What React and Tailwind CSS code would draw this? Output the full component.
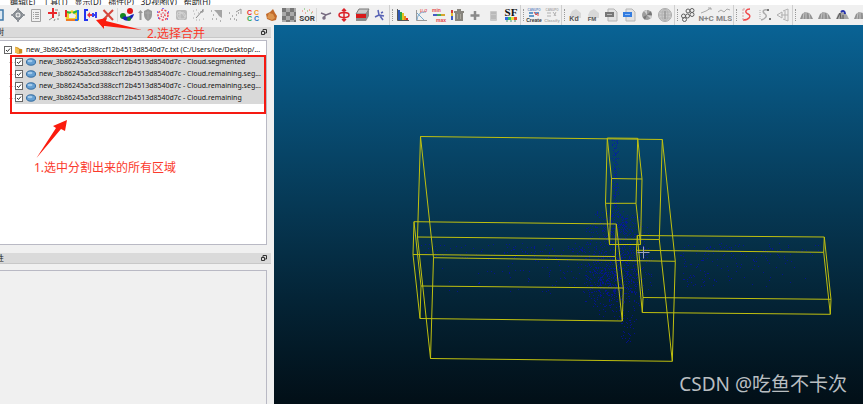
import clsx from 'clsx';

const menus = ['编辑(E)', '工具(T)', '显示(D)', '插件(P)', '3D视图(V)', '帮助(H)'];

const clouds = [
  'new_3b86245a5cd388ccf12b4513d8540d7c - Cloud.segmented',
  'new_3b86245a5cd388ccf12b4513d8540d7c - Cloud.remaining.seg...',
  'new_3b86245a5cd388ccf12b4513d8540d7c - Cloud.remaining.seg...',
  'new_3b86245a5cd388ccf12b4513d8540d7c - Cloud.remaining',
];

// Toolbar drawings, all on a 16 x 16 grid
const art = {
  open: <path d="M2 3h9v10H2z" fill="#dce8f2" stroke="#3f78a8" strokeWidth="1.5" />,
  pick: (
    <g fill="none" stroke="#858b91">
      <path d="M8 2l6 6-6 6-6-6z" />
      <circle cx="8" cy="8" r="3.500" strokeWidth="2" />
      <path d="M8 1v4M8 11v4M1 8h4M11 8h4" strokeWidth="1.500" />
      <circle cx="8" cy="8" r="1" fill="#eee" />
    </g>
  ),
  list: (
    <g fill="none" stroke="#a3a3a3">
      <path d="M3.500 2.500h9v12h-9z" />
      <path d="M5 5.500h1M7 5.500h4M5 7.500h1M7 7.500h4M5 9.500h1M7 9.500h4M5 11.500h1M7 11.500h4" />
    </g>
  ),
  pointPick: (
    <g>
      <path d="M2 6h9M7 1v10" stroke="#e8282d" strokeWidth="2" />
      <path d="M9 3h3M13 5v3M3 13l3-2M8 14l1-2M11 12h2M12 9l2-1" stroke="#8a8a8a" />
    </g>
  ),
  clone: (
    <g>
      <path d="M1 3l4 2 3-2 3 2 4-2v11H2z" fill="#eed22a" />
      <path d="M2 3v7" stroke="#e92525" strokeWidth="2" />
      <path d="M2 13h9" stroke="#f07a25" strokeWidth="2" />
      <path d="M3 5l4 1M9 6l4-2" stroke="#27b83c" strokeWidth="2" />
      <path d="M14 3v10M11 13h3" stroke="#226ef2" strokeWidth="2" />
      <path d="M5 7l3-1 4 2-1 3H5z" fill="#eee" />
    </g>
  ),
  merge: (
    <g fill="none" strokeWidth="2">
      <path d="M6 3H3v10h3" stroke="#2334ef" />
      <path d="M10 8H6" stroke="#e63742" />
      <path d="M8 5v6L5 8z" fill="#e63742" />
      <path d="M11 6v4M14 5v6M11 8h3" stroke="#3641ef" />
    </g>
  ),
  remove: <path d="M3.500 3l9.500 10M13 3L3 13" stroke="#d4473d" strokeWidth="2" fill="none" />,
  register: (
    <g>
      <circle cx="11" cy="4" r="3" fill="#df1616" />
      <circle cx="4" cy="9" r="3" fill="#16871f" />
      <path d="M3 11c3 4 10 4 12-4l-3 1c-2 2-5 2-6 1z" fill="#1724b6" />
      <circle cx="10" cy="12" r="2" fill="#168526" />
    </g>
  ),
  shield: (
    <g fill="#989898">
      <path d="M1 6l2.500-3L6 6H4.500v7h-2V6z" />
      <path d="M7 4l4-2 4 2v4c0 3-2 5-4 6-2-1-4-3-4-6z" />
      <path d="M11 4v8M8 6h6" stroke="#aaa" />
    </g>
  ),
  subsample: (
    <g fill="none" strokeWidth="1.500">
      <circle cx="8" cy="8" r="5" stroke="#f24552" strokeDasharray="2 1.500" />
      <circle cx="8" cy="8" r="2" stroke="#e33d4d" strokeDasharray="1 1" />
      <path d="M2 5h1M13 5h1M3 11h1M12 12h1M8 1v1" stroke="#584bf2" />
    </g>
  ),
  octree: (
    <g>
      <rect x="3" y="3" width="11" height="10" rx="2" fill="#b9b9b9" />
      <path d="M5 5l6 1 2 3-2 3H6L4 8z M5 8l4-2 3 4M7 4v8" stroke="#d4d4d4" fill="none" />
    </g>
  ),
  scatterA: (
    <g fill="none" stroke="#aaa">
      <path d="M2 4h1M5 3h1M3 7h1M7 6h1M2 11h1M5 13h1M8 13h1M12 12h1" />
      <path d="M5 11l7-8M9 5h3V2" stroke="#8a8a8a" />
    </g>
  ),
  scatterB: (
    <g>
      <path d="M5 3h8v8l-3-2-2-3z" fill="#a5a5a5" />
      <path d="M2 4h1M4 8h1M3 12h1M7 12h1M11 14h1" stroke="#777" />
    </g>
  ),
  scatterC: (
    <g fill="none" stroke="#999">
      <path d="M3 12h1M5 9h1M7 12h1M9 8h1M11 6h1M2 6h1M9 13h1" strokeWidth="1.500" />
      <path d="M9 5l5-3v5" />
    </g>
  ),
  cc: (
    <g fontFamily="Liberation Sans" fontWeight="bold" fontSize="7">
      <text x="2" y="8" fill="#e9292e">C</text>
      <text x="9" y="8" fill="#f49722">C</text>
      <text x="2" y="14" fill="#2caa54">C</text>
      <text x="9" y="14" fill="#2874c9">C</text>
    </g>
  ),
  primitive: (
    <g>
      <path d="M3 7l4-2 3-3 2 4 2 3-1 4-4 1-5-2z" fill="#c16a2b" />
      <path d="M6 6l4 1 2 4-3 2-5-2z" fill="#dc954f" />
    </g>
  ),
  checker: (
    <g>
      <path d="M1 1h14v14H1z" fill="#aaa" />
      <path d="M1 1h4v4H1zM9 1h4v4H9zM5 5h4v4H5zM13 5h2v4h-2zM1 9h4v4H1zM9 9h4v4H9zM5 13h4v2H5zM13 13h2v2h-2z" fill="#777" />
    </g>
  ),
  sor: (
    <g>
      <text x="8" y="14" textAnchor="middle" fontFamily="Roboto" fontWeight="bold" fontSize="8" fill="#3c3c3c">SOR</text>
      <path d="M3 4h1M6 6h1M10 3h1M13 5h1" stroke="#ef6a50" />
      <path d="M5 2h1M8 4h1M12 6h1" stroke="#63b957" />
    </g>
  ),
  scissors: (
    <g fill="none" stroke="#776b80" strokeWidth="1.500">
      <path d="M3 6l5 2 5-2M8 8l-2 2" />
      <circle cx="6" cy="11" r="1" />
    </g>
  ),
  translate: (
    <g fill="none" stroke="#db2229" strokeWidth="1.500">
      <path d="M8 2v12M6 4l2-2 2 2M6 12l2 2 2-2" />
      <ellipse cx="8" cy="8" rx="5" ry="2.500" />
    </g>
  ),
  section: (
    <g>
      <path d="M5 2h10l-3 5H2z" fill="#c9c9c9" stroke="#797979" />
      <path d="M2 7h10v4H2z" fill="#d91919" />
      <path d="M12 7l3-5v7l-3 5H2v-3h10z" fill="#8d8d8d" />
    </g>
  ),
  polyline: (
    <path d="M6 3l1 5 5 1M7 8l-4 2M9 6l2-1M8 9l3 4" fill="none" stroke="#5863b5" strokeWidth="1.500" />
  ),
  histogram: (
    <g>
      <path d="M3 3h2v10H3z" fill="#2e59b8" />
      <path d="M5 5h2v8H5z" fill="#28a445" />
      <path d="M7 6h2v7H7z" fill="#e2c420" />
      <path d="M9 9h2v4H9z" fill="#eb8822" />
      <path d="M11 11h2v2h-2z" fill="#da2c2c" />
      <path d="M2.500 2v11.500H14" stroke="#555" fill="none" />
    </g>
  ),
  stats: (
    <g fill="none">
      <path d="M3.500 3v10.500H14" stroke="#999" />
      <path d="M4 13c1-7 4-8 9-8M4 6l7 7" stroke="#76a8cc" />
      <text x="7" y="5" fontFamily="Liberation Sans" fontSize="5" fill="#e53b3b">μ,σ</text>
    </g>
  ),
  minmax: (
    <g fontFamily="Liberation Sans" fontWeight="bold" fontSize="5" fill="#e44848">
      <text x="1" y="5">min</text>
      <text x="5" y="15">max</text>
      <path d="M2 8h4" stroke="#455bc5" strokeWidth="2" />
      <path d="M6 8h4" stroke="#44a85b" strokeWidth="2" />
      <path d="M10 8h4" stroke="#d5a62d" strokeWidth="2" />
    </g>
  ),
  trash: (
    <g>
      <path d="M2 3h2v3H2z" fill="#d43a32" />
      <path d="M2 6h2v3H2z" fill="#e6bd34" />
      <path d="M2 9h2v4H2z" fill="#3a58c5" />
      <path d="M5 4h10v2H5zM8 2h4v2H8zM6 6h8v8H6z" fill="#88857e" />
      <path d="M8.500 7v5M11.500 7v5" stroke="#aaa69d" />
    </g>
  ),
  plus: <path d="M8 4v9M3.500 8.500h9" stroke="#8a8a8a" strokeWidth="2.500" />,
  calc: (
    <g>
      <rect x="5" y="4" width="7" height="10" rx="1" fill="#c9c9c9" />
      <path d="M6 6h5M6 9h5M6 11h5" stroke="#aaa" />
    </g>
  ),
  sf: (
    <g>
      <text x="8" y="9" textAnchor="middle" fontFamily="Liberation Serif" fontWeight="bold" fontSize="11" fill="#111">SF</text>
      <path d="M2 10h3v3H2z" fill="#3468df" />
      <path d="M5 10h3v3H5z" fill="#31c568" />
      <path d="M8 10h3v3H8z" fill="#ead938" />
      <path d="M11 10h3v3h-3z" fill="#e44831" />
      <path d="M3 14h2M7 14h2M11 14h2" stroke="#4d9b78" />
    </g>
  ),
  canupoCreate: (
    <g fontFamily="Liberation Sans" fontWeight="bold">
      <text x="8" y="4" textAnchor="middle" fontSize="3" fill="#6f8fc5">CANUPO</text>
      <path d="M3 6h4M3 9h5M9 6h4" stroke="#367cbc" strokeWidth="1.500" />
      <path d="M8 5l2 3 2-2M11 8h2" stroke="#df4a4a" fill="none" />
      <text x="8" y="15" textAnchor="middle" fontSize="5" fill="#333">Create</text>
    </g>
  ),
  canupoClassify: (
    <g fontFamily="Liberation Sans" fontWeight="bold" fill="#aaa">
      <text x="8" y="4" textAnchor="middle" fontSize="3">CANUPO</text>
      <path d="M3 6h4M3 9h4M9 5l3 4M12 5l-2 4" stroke="#b0b0b0" />
      <text x="8" y="15" textAnchor="middle" fontSize="4">Classify</text>
    </g>
  ),
  kd: (
    <g>
      <path d="M3 8l2-4 4-2 5 4v5H4z" fill="#d8d8d8" />
      <text x="7" y="14" textAnchor="middle" fontFamily="Liberation Sans" fontWeight="bold" fontSize="7" fill="#555">Kd</text>
    </g>
  ),
  fm: (
    <g>
      <path d="M3 8l2-4 4-2 5 4v5H4z" fill="#d8d8d8" />
      <text x="7" y="14" textAnchor="middle" fontFamily="Liberation Sans" fontWeight="bold" fontSize="6" fill="#555">FM</text>
    </g>
  ),
  fileGrey: (
    <g>
      <path d="M5 2h6l3 3v9H5z" fill="#e2e2e2" stroke="#b5b5b5" />
      <path d="M2 5h9v5H2z" fill="#777" />
      <path d="M4 7.500h5" stroke="#bbb" />
    </g>
  ),
  fileBlue: (
    <g>
      <path d="M5 2h6l3 3v9H5z" fill="#e2e2e2" stroke="#b5b5b5" />
      <path d="M2 5h9v5H2z" fill="#347de0" />
      <path d="M4 7.500h5" stroke="#8fbdf8" />
    </g>
  ),
  disc: (
    <g>
      <circle cx="8" cy="8" r="5" fill="#9d9d9d" />
      <path d="M8 8L5 4l3-1zM8 8l5 1-1 3z" fill="#d1d1d1" />
      <path d="M8 8l4-4 1 4zM8 8l-4 2 2 3z" fill="#777" />
    </g>
  ),
  sphere: (
    <g fill="none" stroke="#b2b2b2">
      <circle cx="8" cy="8" r="6.500" fill="#ccc" stroke="#aaa" />
      <ellipse cx="8" cy="8" rx="3" ry="6" />
      <path d="M8 1v14M3 5h10M2 8h12M3 11h10" />
      <path d="M8 4v8" stroke="#8b8b8b" />
    </g>
  ),
  clover: (
    <g fill="none" stroke="#606060">
      <circle cx="8" cy="4" r="2" />
      <circle cx="12" cy="3.500" r="2" />
      <circle cx="12" cy="7.500" r="2" />
      <circle cx="3.500" cy="9" r="2" />
      <circle cx="7.500" cy="9" r="2" />
      <circle cx="4.500" cy="12.500" r="2" />
    </g>
  ),
  nc: (
    <g>
      <path d="M3 6l5-2 5-3M10 1h3v2" fill="none" stroke="#aaa" />
      <text x="8" y="14" textAnchor="middle" fontFamily="Roboto" fontWeight="bold" fontSize="8" fill="#858585">N+C</text>
    </g>
  ),
  mls: (
    <g>
      <path d="M2 5l3-2 3 2 3-3 3 1" fill="none" stroke="#aaa" />
      <text x="8" y="14" textAnchor="middle" fontFamily="Roboto" fontWeight="bold" fontSize="8" fill="#858585">MLS</text>
    </g>
  ),
  curve: (
    <g fill="none">
      <path d="M11 2C7 2 5 5 9 7c4 2 1 6-5 6" stroke="#f14b4d" strokeWidth="1.500" />
      <path d="M4 2v11M4 2h3" stroke="#d5a3a3" strokeDasharray="2 1" />
    </g>
  ),
  curveGrey: (
    <g fill="none" stroke="#aaa">
      <path d="M10 3C6 2 5 5 8 7c3 2 0 5-4 6" strokeWidth="1.500" />
      <path d="M3 3v10" strokeDasharray="1 1" />
      <path d="M10 3h2M12 12h2" stroke="#777" strokeWidth="2" />
    </g>
  ),
  extrude: (
    <path d="M2 8l5-3v6zM8 4l5-2v12l-5-2M6 8h7M10 4v8" fill="none" stroke="#b0b0b0" />
  ),
  mesh: (
    <g>
      <path d="M2 12l2-5 3-2 4 1 2 2 2 4z" fill="#929292" />
      <path d="M6 6l-1 6M8 5v7M11 6l1 6" stroke="#c6c6c6" />
    </g>
  ),
  meshBlue: (
    <g>
      <path d="M2 12l2-5 3-2 4 1 2 2 2 4z" fill="#a5a5a5" />
      <path d="M3 12l3-6 1 6M9 8v4" stroke="#555" fill="none" />
      <path d="M7 5c2-2 4-1 4 2" stroke="#2834ad" strokeWidth="2" fill="none" />
    </g>
  ),
};

// '|' is a thin separator, each inner array is one docked toolbar
const toolbars = [
  [
    'open', 'pick', 'list', 'pointPick', 'clone', 'merge', 'remove', '|',
    'register', 'shield', 'subsample', 'octree', 'scatterA', 'scatterB', 'scatterC',
    'cc', 'primitive', 'checker', 'sor', '|',
    'scissors', 'translate', 'section', 'polyline',
  ],
  ['histogram', 'stats', 'minmax', 'trash', 'plus', 'calc', 'sf'],
  ['canupoCreate', 'canupoClassify'],
  ['kd', 'fm', 'fileGrey', 'fileBlue', 'disc', 'sphere'],
  ['clover', 'nc', 'mls'],
  ['curve', 'curveGrey', 'extrude'],
  ['mesh', 'mesh', 'meshBlue', 'mesh'],
];

// Bounding boxes: one loop per end, joined corner to corner
const boxes = [
  {
    left: [[420.5, 136.5], [417.5, 237], [430.5, 358.5], [433.5, 257.7]],
    right: [[662.3, 139.5], [659.3, 239.5], [672.3, 361.3], [675.3, 261.3]],
  },
  {
    left: [[414, 221.7], [413, 254.5], [420, 318.5], [421, 286]],
    right: [[616.3, 224], [615.3, 256.5], [622.3, 321], [623.3, 288]],
  },
  {
    left: [[607.3, 138], [605.5, 203.3], [609.5, 244.5], [611.5, 178.5]],
    right: [[637.7, 138.3], [636, 203.3], [640.5, 244.5], [642, 179]],
  },
  {
    left: [[637.3, 235.5], [636.5, 250.3], [642.3, 312.5], [643, 297.5]],
    right: [[824.3, 237], [823.7, 252.3], [830.3, 314.3], [831, 299.3]],
  },
];

const boxPath = ({ left, right }) => {
  const loop = (pts) => `M${pts.map((p) => p.join(' ')).join('L')}Z`;
  const edges = left.map((p, i) => `M${p.join(' ')}L${right[i].join(' ')}`).join('');
  return loop(left) + loop(right) + edges;
};

const makeCloud = () => {
  let seed = 7;
  const rand = () => {
    seed = (seed * 16807) % 2147483647;
    return seed / 2147483647;
  };
  const bell = () => rand() + rand() - 1;
  let d = '';
  const add = (count, x, y) => {
    for (let i = 0; i < count; i += 1) {
      d += `M${Math.round(x())} ${Math.round(y())}h1v1h-1z`;
    }
  };
  add(110, () => 615 + bell() * 4, () => 139 + rand() * 70);
  add(520, () => 618 + bell() * 36, () => 258 + bell() * 52);
  add(200, () => 606 + bell() * 22, () => 285 + bell() * 34);
  add(160, () => 614 + bell() * 30, () => 225 + bell() * 18);
  add(160, () => 624 + bell() * 20, () => 285 + bell() * 50);
  add(130, () => 590 - rand() * rand() * 165, () => 243 + rand() * 50);
  add(70, () => 420 + rand() * 180, () => 243 + rand() * 14);
  add(120, () => 680 + rand() * rand() * 140, () => 243 + rand() * 44);
  add(50, () => 700 + rand() * 120, () => 243 + rand() * 16);
  add(30, () => 628 + bell() * 9, () => 320 + rand() * 22);
  return d;
};

const cloudPath = makeCloud();

const ToolButton = ({ name }) => (
  <button type="button" aria-label={name} className="w-[18px] h-[18px] shrink-0 flex items-center justify-center">
    <svg viewBox="0 0 16 16" className="w-4 h-4" aria-hidden="true">{art[name]}</svg>
  </button>
);

const DockHeader = ({ title }) => (
  <div className="h-[11px] mr-px flex items-center justify-between bg-[#dadada] border-b border-[#c8c8c8] pr-1 overflow-hidden">
    <span className="-ml-1 text-[8px] leading-[10px] text-[#222]">{title}</span>
    <button type="button" aria-label={`Float ${title}`} className="flex">
      <svg viewBox="0 0 6 6" className="w-1.5 h-1.5" fill="none" stroke="#333">
        <path d="M2 2V.5h3.500V4H4M.5 2.500h3v3h-3z" />
      </svg>
    </button>
  </div>
);

const TreeRow = ({ label, root }) => (
  <label className={clsx('h-3 flex items-center gap-[3px] whitespace-nowrap', !root && 'bg-[#d9d9d9]')}>
    <span className="relative w-2 h-2 shrink-0">
      <input
        type="checkbox"
        defaultChecked
        className="peer block appearance-none w-2 h-2 border border-[#666] bg-white"
      />
      <svg
        viewBox="0 0 8 8"
        className="absolute inset-0 w-2 h-2 pointer-events-none invisible peer-checked:visible"
        fill="none"
        stroke="#333"
      >
        <path d="M2 4l1.500 1.500L6 2.500" />
      </svg>
    </span>
    {root ? (
      <svg viewBox="0 0 10 10" className="w-2 h-2 shrink-0">
        <path d="M0 1l4 1 1 1 4 1v5l-5 1-4-2z" fill="#c98a1c" />
        <path d="M0 1l5 3v6L0 8z" fill="#f0bd4f" />
      </svg>
    ) : (
      <svg viewBox="0 0 10 10" className="w-2.5 h-2.5 shrink-0">
        <ellipse cx="5" cy="5" rx="4.500" ry="3.200" fill="#659fd2" stroke="#336b9f" />
        <ellipse cx="4" cy="4" rx="2.500" ry="1.200" fill="#a4cae9" />
      </svg>
    )}
    <span>{label}</span>
  </label>
);

const App = () => (
  <div className="min-h-screen flex flex-col bg-[#f0f0f0] font-['Noto_Sans','Noto_Sans_CJK_SC',sans-serif] overflow-hidden">
    <nav className="h-[5px] flex items-end gap-[7px] pl-2.5 bg-white overflow-hidden text-[8px] leading-[7px] text-[#222]">
      {menus.map((item) => (
        <button key={item} type="button" className="shrink-0">{item}</button>
      ))}
    </nav>

    <div className="h-5 -ml-[9px] flex items-center overflow-hidden">
      {toolbars.map((tools, i) => (
        <div key={i} className="h-full flex items-center shrink-0">
          {i > 0 && (
            <span className="h-full w-[5px] pl-0.5 py-1 border-l border-[#cfcfcf]">
              <span className="block h-full w-px border-l border-dotted border-[#999]" />
            </span>
          )}
          {tools.map((name, j) =>
            name === '|' ? (
              <span key={j} className="w-px h-3.5 bg-[#d8d8d8]" />
            ) : (
              <ToolButton key={j} name={name} />
            )
          )}
        </div>
      ))}
    </div>

    <div className="flex-1 flex">
      <aside className="relative w-[272px] shrink-0 flex flex-col pt-0.5">
        <DockHeader title="树" />
        <div className="h-[205px] mt-0.5 mr-[5px] pt-[3px] bg-white border-y border-r border-[#b9b9c4] text-[7px] leading-3 text-[#111]">
          <div className="pl-1">
            <TreeRow root label="new_3b86245a5cd388ccf12b4513d8540d7c.txt (C:/Users/ice/Desktop/..." />
          </div>
          <div className="relative ml-2 pl-[7px] pb-2">
            {clouds.map((label, i) => (
              <div key={i} className="relative">
                <span className="absolute -left-1.5 top-1.5 w-1.5 border-t border-dotted border-[#ccc]" />
                <TreeRow label={label} />
              </div>
            ))}
            <div className="absolute left-0.5 right-0 -top-px -bottom-0.5 border-2 border-[#f51a12] pointer-events-none" />
          </div>
        </div>

        {/* step notes */}
        <svg viewBox="0 0 34 40" className="absolute left-[35px] top-[94px] w-[34px] h-10" fill="#fb1b0d">
          <path d="M1.500 39L21 9l-3-2L32 1l-2 11-4-2z" />
        </svg>
        <p className="absolute left-[34px] top-[135px] text-xs leading-4 text-[#fb3a2c] whitespace-nowrap">
          1.选中分割出来的所有区域
        </p>
        <svg viewBox="0 0 48 14" className="absolute left-24 -top-[7px] w-12 h-3.5" fill="#fb1b0d">
          <path d="M0 2L11 0l-1 3 36 9-38-4v3z" />
        </svg>
        <p className="absolute left-[147px] top-px text-xs leading-4 text-[#fb3a2c] whitespace-nowrap">
          2.选择合并
        </p>

        <div className="mt-2">
          <DockHeader title="性" />
        </div>
        <div className="flex-1 mt-1.5 mr-[5px] border-t border-r border-[#b9b9c4]" />
      </aside>

      <main className="relative flex-1 ml-0.5 bg-linear-to-b from-[#096395] to-[#020f17]">
        <svg viewBox="274 25 589 379" className="block w-full" aria-label="3D view">
          <path d={cloudPath} fill="#0508c8" fillOpacity="0.6" shapeRendering="crispEdges" />
          <g fill="none" stroke="#c0c00f" strokeWidth="1">
            {boxes.map((box, i) => (
              <path key={i} d={boxPath(box)} />
            ))}
          </g>
          <path d="M643.500 246.500v12M637.500 252.500h12" stroke="#9c9fc0" />
        </svg>
        <p className="absolute right-4 bottom-1.5 text-[19px] leading-7 text-[#b9bec1] whitespace-nowrap">
          CSDN @吃鱼不卡次
        </p>
      </main>
    </div>
  </div>
);

export default App;
